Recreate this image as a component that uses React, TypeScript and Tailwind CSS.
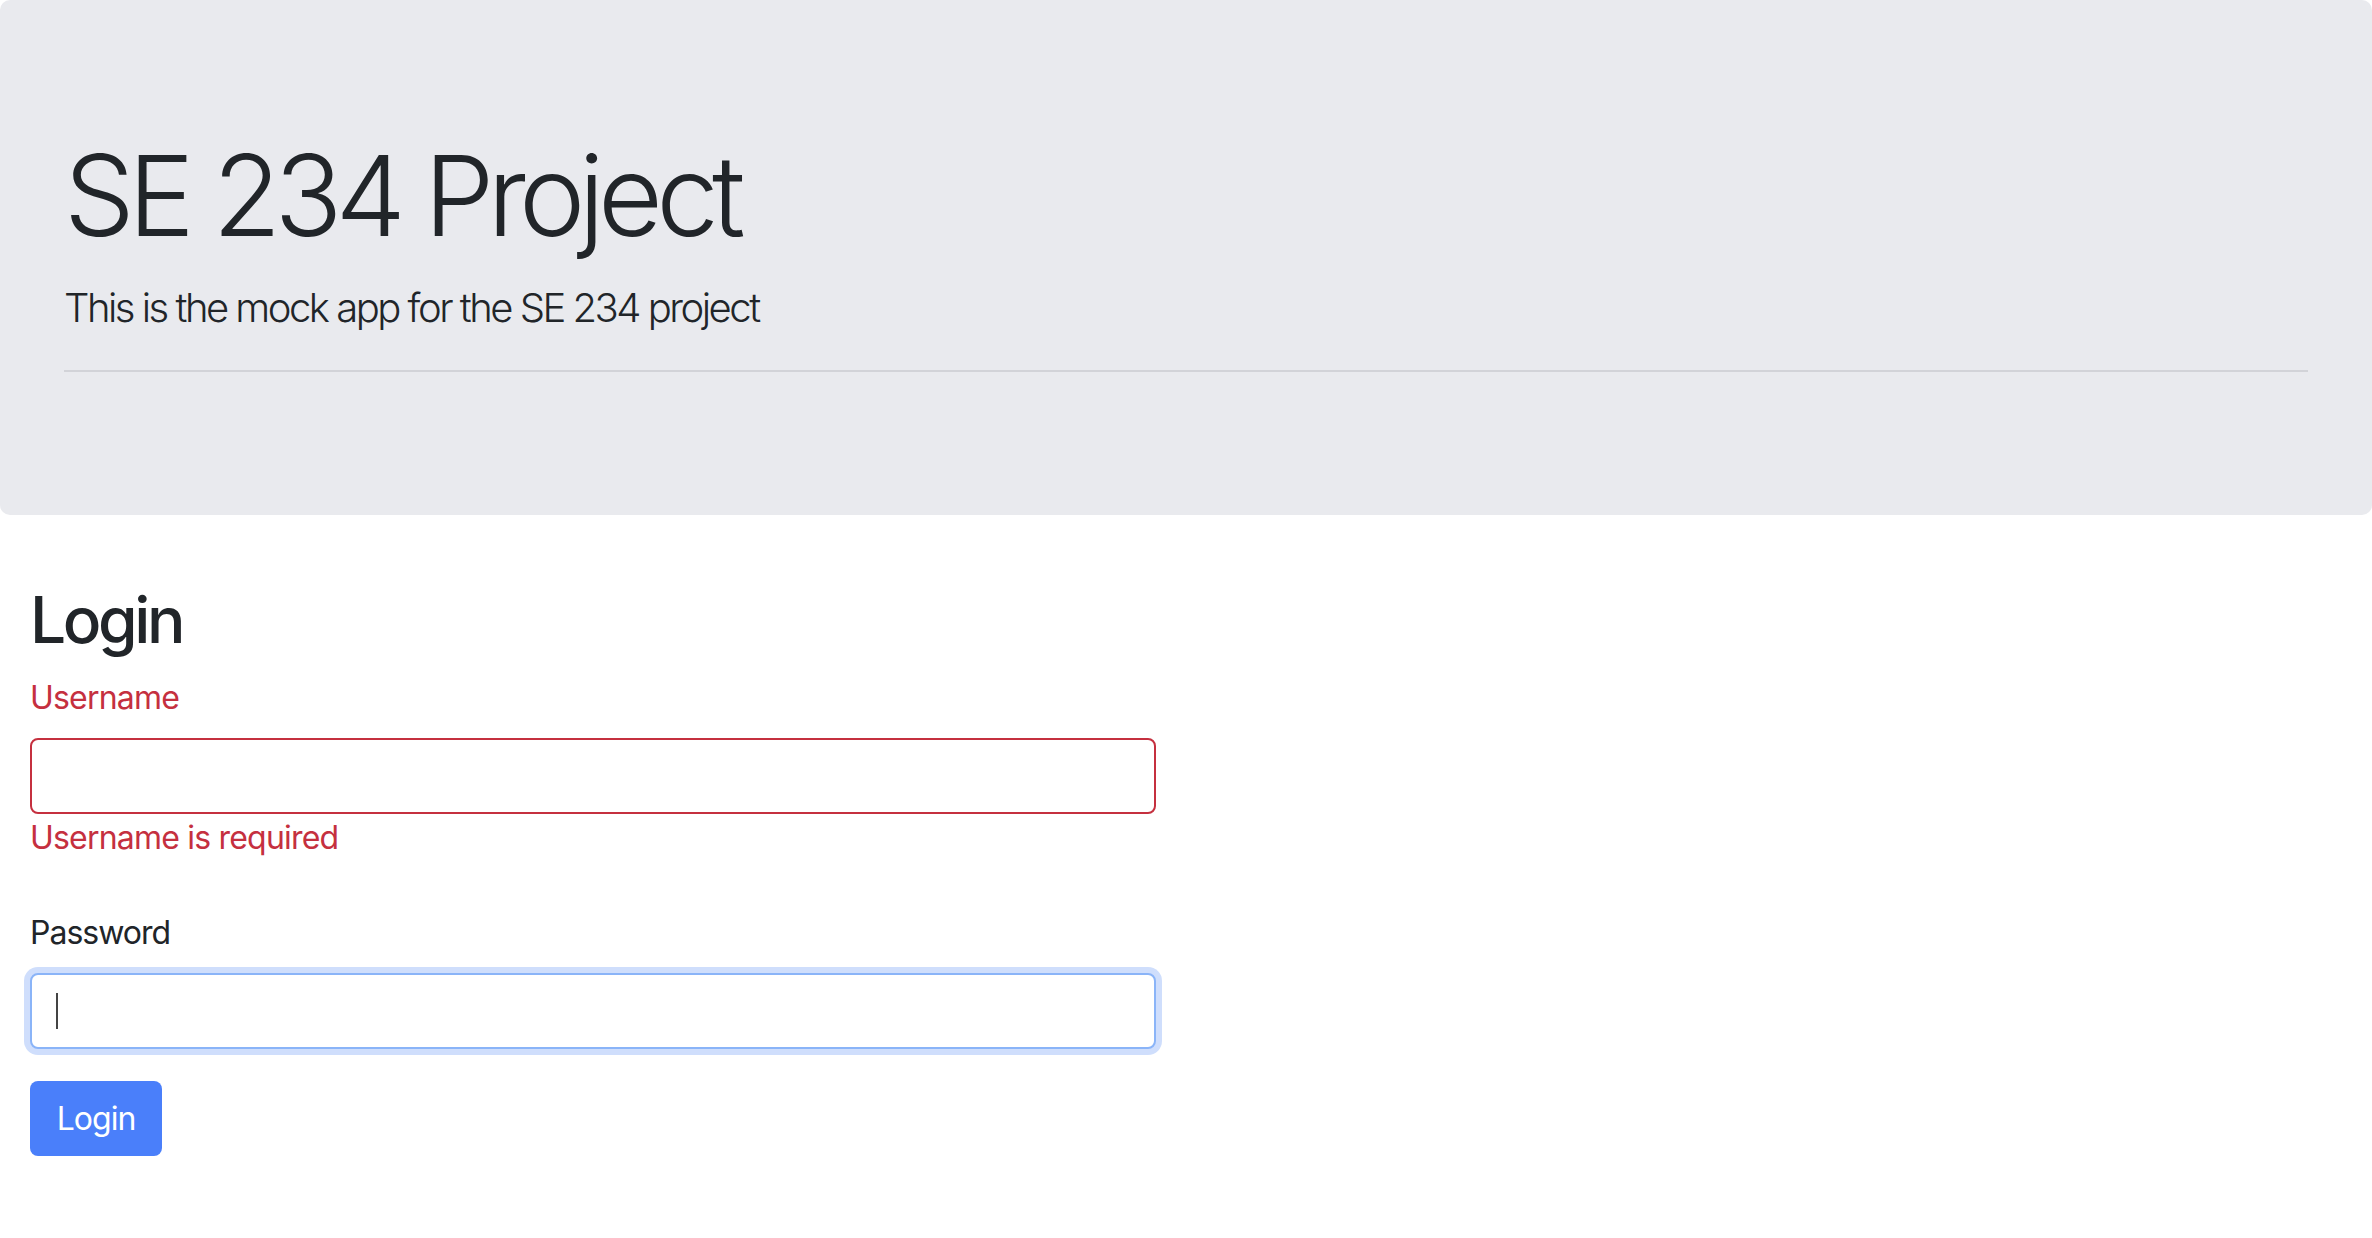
export default function App() {
  return (
    <div className="min-h-screen bg-white text-[#212529] font-['Inter','Noto_Sans',sans-serif]">
      {/* Jumbotron */}
      <header className="bg-[#e9eaee] rounded-[10px] px-[64px] pt-[128px] pb-[143px]">
        <h1 className="text-[112px] leading-[134px] font-light mb-[16px] tracking-[-6.8px]">
          SE 234 Project
        </h1>
        <p className="text-[40px] leading-[60px] font-light tracking-[-2.5px]">
          This is the mock app for the SE 234 project
        </p>
        <hr className="mt-[32px] border-0 border-t-2 border-[#d2d3d8]" />
      </header>

      {/* Login form */}
      <main className="px-[30px] mt-[66px]">
        <h2 className="text-[64px] leading-[77px] font-medium mb-[16px] tracking-[-3.4px]">Login</h2>

        <form className="flex flex-col w-[1126px] tracking-[-0.8px]" onSubmit={(e) => e.preventDefault()}>
          <label className="text-[32px] leading-[48px] text-[#c5303f] mb-[16px]">Username</label>
          <input
            type="text"
            className="h-[76px] w-full rounded-[8px] border-2 border-[#c5303f] bg-white px-[24px] text-[32px] outline-none"
          />
          <div className="text-[32px] leading-[48px] text-[#c5303f]">Username is required</div>

          <label className="text-[32px] leading-[48px] mt-[47px] mb-[16px] tracking-[-1px]">Password</label>
          <div className="h-[76px] w-full rounded-[8px] border-2 border-[#8ab4f8] bg-white shadow-[0_0_0_6px_#cfdefc] flex items-center pl-[24px]">
            <span className="w-[2px] h-[36px] bg-[#444]" />
            <input type="password" className="flex-1 h-full bg-transparent outline-none text-[32px] caret-transparent" />
          </div>

          <div className="mt-[32px]">
            <button
              type="submit"
              className="h-[75px] w-[132px] flex items-center justify-center rounded-[8px] bg-[#4a7ffa] text-white text-[32px] leading-[48px] tracking-[-1px]"
            >
              Login
            </button>
          </div>
        </form>
      </main>
    </div>
  )
}
